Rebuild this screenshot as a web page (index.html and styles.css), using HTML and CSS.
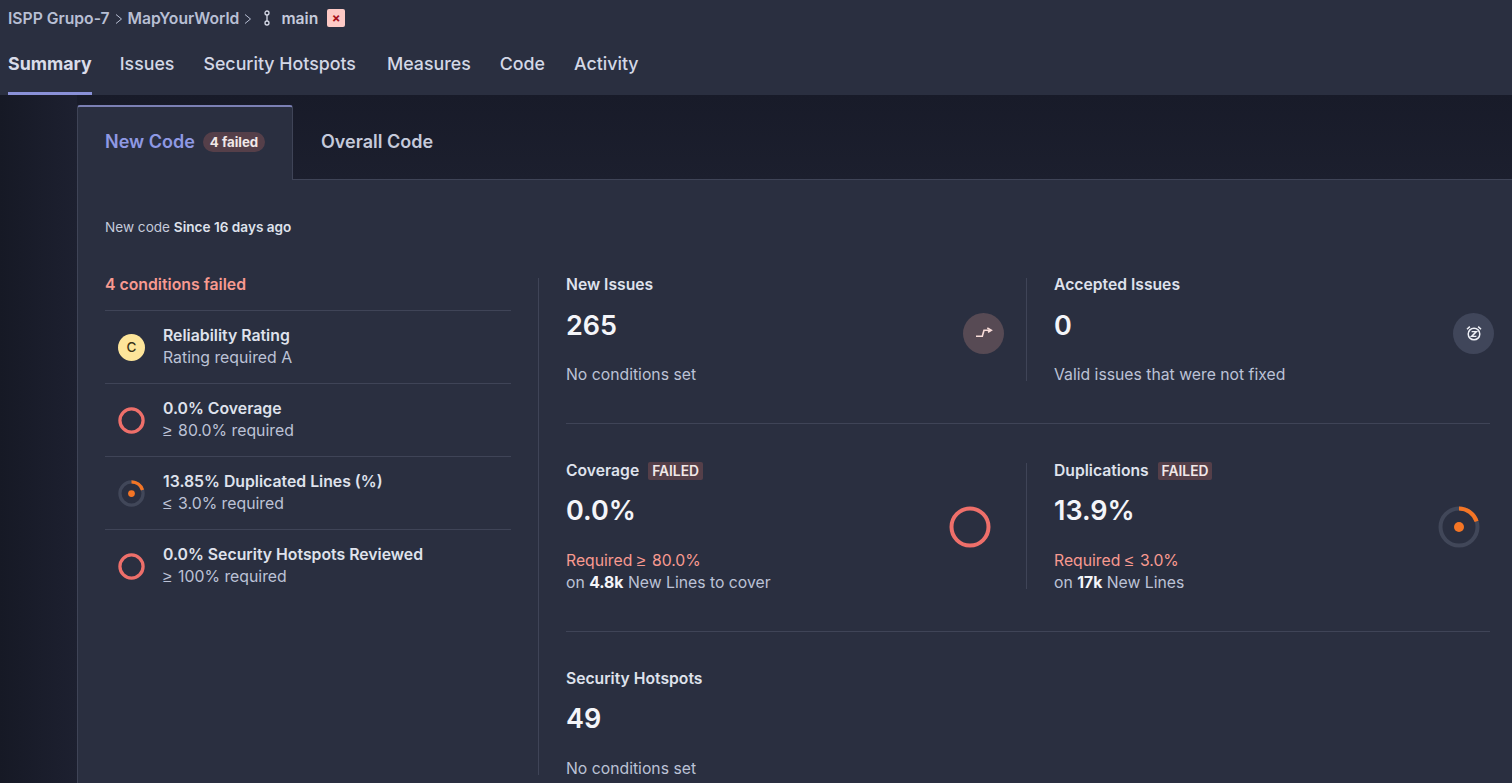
FILE: index.html
```html
<!DOCTYPE html>
<html lang="en">
<head>
    <meta charset="UTF-8">
    <title>MapYourWorld - Summary</title>
    <link rel="stylesheet" href="styles.css">
</head>
<body>
    <header class="top">
        <div class="crumbs">
            <span>ISPP Grupo-7</span>
            <svg class="chev" width="10" height="12" viewBox="0 0 10 12"><path d="M2 1.5 7.5 6 2 10.5" fill="none" stroke="#b8bfd4" stroke-width="1"/></svg>
            <span>MapYourWorld</span>
            <svg class="chev" width="10" height="12" viewBox="0 0 10 12"><path d="M2 1.5 7.5 6 2 10.5" fill="none" stroke="#b8bfd4" stroke-width="1"/></svg>
            <svg class="branch" width="12" height="16" viewBox="0 0 12 16"><circle cx="6" cy="3" r="2" fill="none" stroke="#d5d9e6" stroke-width="1.3"/><circle cx="6" cy="13" r="2" fill="none" stroke="#d5d9e6" stroke-width="1.3"/><path d="M6 5v6" stroke="#d5d9e6" stroke-width="1.3"/></svg>
            <span class="branch-name">main</span>
            <span class="status-x">×</span>
        </div>
        <nav class="tabs-main">
            <a class="active">Summary</a>
            <a>Issues</a>
            <a class="wide">Security Hotspots</a>
            <a>Measures</a>
            <a>Code</a>
            <a>Activity</a>
        </nav>
    </header>

    <main class="wrap">
        <div class="panel-tabs">
            <div class="ptab current">
                <span class="ptab-title">New Code</span>
                <span class="pill">4 failed</span>
            </div>
            <div class="ptab other">Overall Code</div>
        </div>

        <section class="panel">
            <p class="since">New code <b>Since 16 days ago</b></p>

            <div class="columns">
                <div class="conditions">
                    <h4>4 conditions failed</h4>
                    <div class="cond">
                        <span class="rating">C</span>
                        <div><b>Reliability Rating</b><span>Rating required A</span></div>
                    </div>
                    <div class="cond">
                        <svg class="ring-sm" width="27" height="27" viewBox="0 0 28 28"><circle cx="14" cy="14" r="12" fill="none" stroke="#ee6f6a" stroke-width="3.4"/></svg>
                        <div><b>0.0% Coverage</b><span><i class="sym">≥</i> 80.0% required</span></div>
                    </div>
                    <div class="cond">
                        <svg class="ring-sm" width="27" height="27" viewBox="0 0 28 28"><circle cx="14" cy="14" r="12" fill="none" stroke="#414759" stroke-width="3.4"/><path d="M14 2A12 12 0 0 1 25.4 10.3" fill="none" stroke="#f47525" stroke-width="3.4"/><circle cx="14" cy="14" r="3.5" fill="#f47525"/></svg>
                        <div><b>13.85% Duplicated Lines (%)</b><span><i class="sym">≤</i> 3.0% required</span></div>
                    </div>
                    <div class="cond">
                        <svg class="ring-sm" width="27" height="27" viewBox="0 0 28 28"><circle cx="14" cy="14" r="12" fill="none" stroke="#ee6f6a" stroke-width="3.4"/></svg>
                        <div><b>0.0% Security Hotspots Reviewed</b><span><i class="sym">≥</i> 100% required</span></div>
                    </div>
                </div>

                <div class="metrics">
                    <div class="row row-issues">
                        <div class="metric first">
                            <div>
                                <h5>New Issues</h5>
                                <div class="value">265</div>
                                <p class="note">No conditions set</p>
                            </div>
                            <span class="round red">
                                <svg width="18" height="14" viewBox="0 0 18 14"><path d="M1 10.3h6.3L9 4.3h6.7" fill="none" stroke="#f8dcd8" stroke-width="1.6"/><path d="M12.3 2l4 2.3-3.3 2" fill="none" stroke="#f8dcd8" stroke-width="1.6"/></svg>
                            </span>
                        </div>
                        <div class="metric second">
                            <div>
                                <h5>Accepted Issues</h5>
                                <div class="value">0</div>
                                <p class="note">Valid issues that were not fixed</p>
                            </div>
                            <span class="round grey">
                                <svg width="16" height="16" viewBox="0 0 16 16"><circle cx="8" cy="9" r="5.8" fill="none" stroke="#eef0f6" stroke-width="1.5"/><path d="M1 4.2 3.8 1.6M15 4.2 12.2 1.6" stroke="#eef0f6" stroke-width="1.5"/><path d="M5.6 6.6h4.8L5.6 11.4h4.8" fill="none" stroke="#eef0f6" stroke-width="1.4"/></svg>
                            </span>
                        </div>
                    </div>

                    <div class="row row-cover">
                        <div class="metric first">
                            <div>
                                <h5>Coverage <em class="tag">FAILED</em></h5>
                                <div class="value">0.0%</div>
                                <p class="note"><span class="bad">Required <i class="sym">≥</i> 80.0%</span><br>on <b>4.8k</b> New Lines to cover</p>
                            </div>
                            <svg class="ring ring-cover" width="42" height="42" viewBox="0 0 42 42"><circle cx="21" cy="21" r="18.5" fill="none" stroke="#ee6f6a" stroke-width="4"/></svg>
                        </div>
                        <div class="metric second">
                            <div>
                                <h5>Duplications <em class="tag">FAILED</em></h5>
                                <div class="value">13.9%</div>
                                <p class="note"><span class="bad">Required <i class="sym">≤</i> 3.0%</span><br>on <b>17k</b> New Lines</p>
                            </div>
                            <svg class="ring ring-dup" width="42" height="42" viewBox="0 0 42 42"><circle cx="21" cy="21" r="18.5" fill="none" stroke="#414759" stroke-width="4"/><path d="M21 2.5A18.5 18.5 0 0 1 38.6 15.3" fill="none" stroke="#f47525" stroke-width="4"/><circle cx="21" cy="21" r="5" fill="#f47525"/></svg>
                        </div>
                    </div>

                    <div class="row-hotspots">
                        <h5>Security Hotspots</h5>
                        <div class="value">49</div>
                        <p class="note">No conditions set</p>
                    </div>
                </div>
            </div>
        </section>
    </main>
</body>
</html>
```

FILE: styles.css
```css
* {
    box-sizing: border-box;
}

html, body {
    height: 783px;
    overflow: hidden;
}

body {
    font-family: Inter, "Noto Sans", sans-serif;
    margin: 0;
    color: #c9cee0;
    background: linear-gradient(90deg, #161925 0, #1d2030 77px);
}

/* header */
.top {
    height: 95px;
    background-color: #2a2f40;
    padding: 0 8px;
}

.crumbs {
    display: flex;
    align-items: center;
    height: 36px;
    font-size: 15.7px;
    font-weight: 600;
    color: #b8bfd4;
}

.chev {
    margin: 1px 4px 0 4px;
}

.branch {
    margin: 0 8px 0 4px;
}

.branch-name {
    color: #c5cadb;
}

.status-x {
    display: flex;
    align-items: center;
    justify-content: center;
    width: 18px;
    height: 18px;
    margin-left: 9px;
    border-radius: 2px;
    background-color: #fdc9c5;
    color: #a5101a;
    font-size: 13px;
    font-weight: 700;
}

.tabs-main {
    display: flex;
    height: 59px;
    gap: 29px;
    font-size: 17.8px;
    font-weight: 500;
    color: #d3d7e6;
}

.tabs-main a {
    padding-top: 17px;
    border-bottom: 3px solid transparent;
}

.tabs-main a.active {
    margin-right: -1px;
    font-weight: 700;
    color: #d9dce9;
    border-bottom-color: #8a91d8;
}

.tabs-main a.wide {
    margin-right: 2px;
}

/* code tabs */
.wrap {
    margin-left: 77px;
    padding-top: 10px;
    background: linear-gradient(180deg, #181b29 0, #1c1f2e 85px);
    height: 688px;
}

.panel-tabs {
    display: flex;
    height: 75px;
    font-size: 18px;
    font-weight: 600;
}

.ptab {
    display: flex;
    align-items: center;
    padding-bottom: 2px;
}

.current {
    width: 216px;
    padding-left: 27px;
    padding-bottom: 4px;
    gap: 8px;
    background-color: #2a2f40;
    border-top: 2px solid #7b80b4;
    border-left: 1px solid #3f4457;
    border-right: 1px solid #3f4457;
    border-radius: 3px 3px 0 0;
}

.ptab-title {
    color: #8f99e4;
}

.pill {
    padding: 2px 7px;
    border-radius: 11px;
    background-color: #553f49;
    color: #f1e8e8;
    font-size: 13.3px;
    font-weight: 700;
}

.other {
    flex: 1;
    padding-left: 28px;
    color: #c5cadb;
    border-bottom: 1px solid #3f4457;
}

.panel {
    height: 613px;
    padding: 0 22px 0 27px;
    background-color: #2a2f40;
    border-left: 1px solid #3f4457;
}

.since {
    margin: 0;
    padding-top: 39px;
    height: 98px;
    font-size: 13.6px;
    font-weight: 400;
    color: #c5cadb;
}

.since b {
    font-weight: 600;
    color: #dfe2ec;
}

.columns {
    display: flex;
}

.sym {
    font-family: "Liberation Sans", sans-serif;
    font-style: normal;
    margin-right: 2px;
}

/* left list */
.conditions {
    width: 406px;
    margin-right: 27px;
}

.conditions h4 {
    margin: -2px 0 0;
    height: 34px;
    font-size: 15.8px;
    line-height: 18px;
    font-weight: 600;
    color: #f89a90;
}

.cond {
    display: flex;
    align-items: center;
    height: 73px;
    padding-left: 13px;
    gap: 18px;
    border-top: 1px solid #3f4457;
}

.cond div {
    display: flex;
    flex-direction: column;
    gap: 3px;
    line-height: 19px;
    font-size: 15.8px;
    padding-bottom: 1px;
}

.cond b {
    font-weight: 600;
    color: #dfe2ec;
}

.cond span {
    color: #bcc2d6;
}

.rating {
    display: flex;
    align-items: center;
    justify-content: center;
    width: 27px;
    height: 27px;
    flex: none;
    border-radius: 50%;
    background-color: #fde59a;
    color: #3a3418 !important;
    font-size: 13.5px;
    font-weight: 500;
}

.ring-sm {
    flex: none;
}

/* right side */
.metrics {
    width: 952px;
    height: 497px;
    padding-left: 27px;
    border-left: 1px solid #3f4457;
}

.row {
    display: flex;
}

.row-issues {
    height: 146px;
    border-bottom: 1px solid #3f4457;
}

.row-issues h5 {
    margin-top: -2px;
}

.row-issues .value {
    margin-top: 15px;
}

.row-issues .note {
    margin-top: 22px;
}

.row-cover {
    height: 208px;
    padding-top: 39px;
    border-bottom: 1px solid #3f4457;
}

.row-cover h5 {
    margin-top: -1px;
}

.metric {
    display: flex;
    justify-content: space-between;
    align-items: center;
    height: 126px;
}

.metric > div {
    align-self: flex-start;
}

.row-issues .metric {
    height: 103px;
}

.first {
    width: 461px;
    padding-right: 22px;
    border-right: 1px solid #3f4457;
    margin-right: 27px;
}

.second {
    flex: 1;
    padding-right: 0;
}

h5 {
    margin: 0;
    font-size: 15.7px;
    line-height: 18px;
    font-weight: 600;
    color: #dfe2ec;
}

.tag {
    display: inline-block;
    margin-left: 5px;
    padding: 0 4px;
    border-radius: 2px;
    background-color: #553f49;
    color: #f1e8e8;
    font-size: 13.8px;
    font-style: normal;
    font-weight: 600;
}

.value {
    margin-top: 14px;
    font-size: 27px;
    line-height: 33px;
    font-weight: 600;
    color: #f4f5f9;
}

.note {
    margin: 23px 0 0;
    font-size: 15.75px;
    line-height: 22px;
    color: #bcc2d6;
}

.note b {
    font-weight: 700;
    color: #f4f5f9;
}

.bad {
    color: #f89a90;
}

.round {
    display: flex;
    align-items: center;
    justify-content: center;
    width: 41px;
    height: 41px;
    border-radius: 50%;
    margin-top: 7px;
}

.round.red {
    background-color: #574a54;
}

.round.grey {
    background-color: #40465a;
    margin-right: -4px;
}

.ring {
    margin-top: 2px;
}

.ring-cover {
    margin-right: 13px;
}

.ring-dup {
    margin-right: 10px;
}

.row-hotspots {
    padding-top: 38px;
}
```
